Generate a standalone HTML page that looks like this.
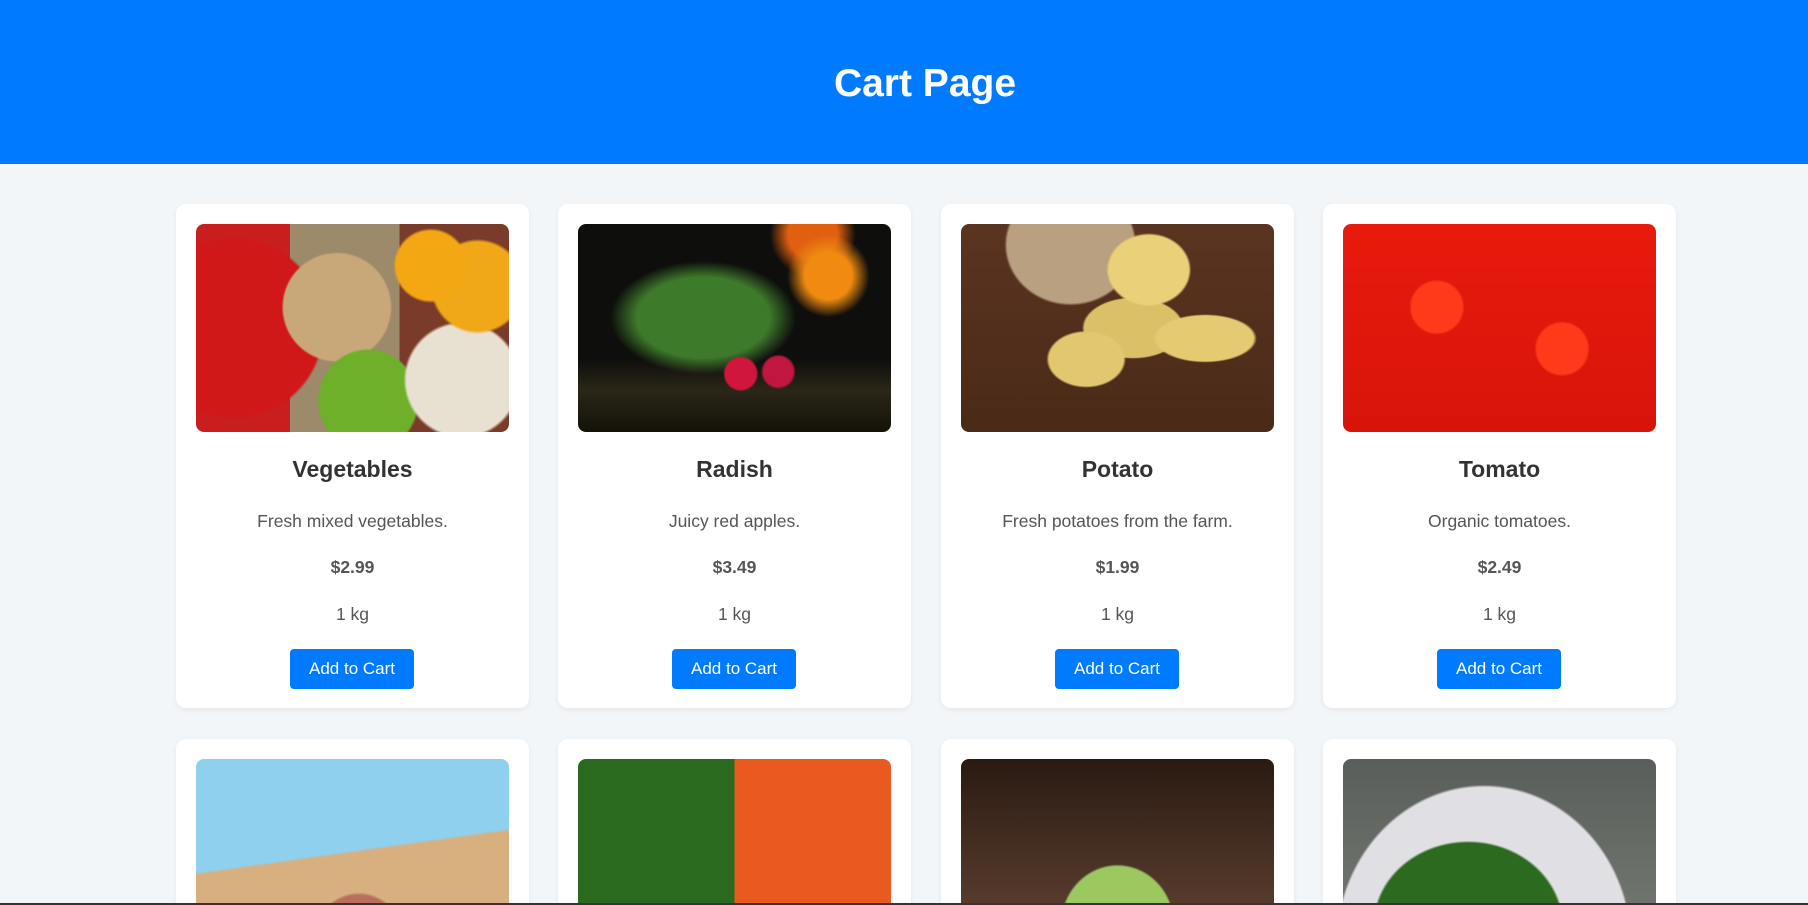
<!DOCTYPE html>
<html><head><meta charset="utf-8"><style>
*{margin:0;padding:0;box-sizing:border-box}
html,body{width:1808px;height:905px;overflow:hidden;background:#f2f6f9;font-family:"Liberation Sans",Arial,sans-serif}
#wrap{position:relative;width:1808px;height:905px;overflow:hidden}
header{position:absolute;left:0;top:0;width:1808px;height:164px;background:#007bff}
header h1{position:absolute;left:0;width:1850px;top:60px;text-align:center;color:#fff;font-size:39px;font-weight:bold;line-height:48px}
.card{position:absolute;width:353px;height:504px;background:#fff;border-radius:10px;box-shadow:0 2px 6px rgba(0,0,0,0.06);text-align:center;overflow:hidden}
.r2{height:166px;border-radius:10px 10px 0 0}
.img{position:absolute;left:20px;top:20px;width:313px;height:208px;border-radius:8px;overflow:hidden}
.t{position:absolute;left:0;right:0;top:250px;font-size:23px;font-weight:bold;color:#333;line-height:30px}
.d{position:absolute;left:0;right:0;top:305px;font-size:17.5px;color:#555;line-height:24px}
.p{position:absolute;left:0;right:0;top:351px;font-size:17.5px;font-weight:bold;color:#555;line-height:24px}
.k{position:absolute;left:0;right:0;top:398px;font-size:17.5px;color:#555;line-height:24px}
.b{position:absolute;left:114px;top:445px;width:124px;height:40px;background:#007bff;color:#fff;border-radius:4px;font-size:17px;line-height:40px}
.line{position:absolute;left:0;top:903px;width:1808px;height:2px;background:#333}
</style></head><body><div id="wrap">
<header><h1>Cart Page</h1></header>

<div class="card" style="left:176px;top:204px">
<div class="img" style="background:
radial-gradient(circle at 75% 20%,#f3a712 0 12%,transparent 13%),
radial-gradient(circle at 90% 30%,#f0a818 0 14%,transparent 15%),
radial-gradient(circle at 85% 75%,#e8e0d0 0 18%,transparent 19%),
radial-gradient(ellipse at 55% 85%,#6fb02a 0 20%,transparent 21%),
radial-gradient(circle at 45% 40%,#c8a878 0 25%,transparent 26%),
radial-gradient(circle at 12% 50%,#d01818 0 30%,transparent 31%),
linear-gradient(90deg,#c81e1e 0 30%,#9c8a6a 30% 65%,#7a3b2a 65% 100%)"></div>
<div class="t">Vegetables</div><div class="d">Fresh mixed vegetables.</div><div class="p">$2.99</div><div class="k">1 kg</div><div class="b">Add to Cart</div></div>

<div class="card" style="left:558px;top:204px">
<div class="img" style="background:
radial-gradient(circle at 52% 72%,#d0163c 0 7%,transparent 8%),
radial-gradient(circle at 64% 71%,#c01640 0 6%,transparent 7%),
radial-gradient(circle at 80% 25%,#f08a10 0 8%,transparent 14%),
radial-gradient(circle at 75% 5%,#e06010 0 8%,transparent 14%),
radial-gradient(ellipse at 40% 45%,#3d7a2a 0 25%,transparent 35%),
linear-gradient(180deg,#0e0e0c 0 65%,#2a2618 80%,#141208 100%)"></div>
<div class="t">Radish</div><div class="d">Juicy red apples.</div><div class="p">$3.49</div><div class="k">1 kg</div><div class="b">Add to Cart</div></div>

<div class="card" style="left:941px;top:204px">
<div class="img" style="background:
radial-gradient(ellipse at 40% 65%,#e2c670 0 14%,transparent 15%),
radial-gradient(ellipse at 78% 55%,#e6ca72 0 14%,transparent 15%),
radial-gradient(ellipse at 60% 22%,#ead078 0 15%,transparent 16%),
radial-gradient(ellipse at 55% 50%,#dcc068 0 20%,transparent 21%),
radial-gradient(ellipse at 35% 10%,#b8a080 0 22%,transparent 23%),
linear-gradient(180deg,#5a3420,#4a2a18)"></div>
<div class="t">Potato</div><div class="d">Fresh potatoes from the farm.</div><div class="p">$1.99</div><div class="k">1 kg</div><div class="b">Add to Cart</div></div>

<div class="card" style="left:1323px;top:204px">
<div class="img" style="background:
radial-gradient(circle at 30% 40%,#ff3a1a 0 10%,transparent 11%),
radial-gradient(circle at 70% 60%,#ff3a1a 0 10%,transparent 11%),
linear-gradient(180deg,#e81a0c,#d8140a)"></div>
<div class="t">Tomato</div><div class="d">Organic tomatoes.</div><div class="p">$2.49</div><div class="k">1 kg</div><div class="b">Add to Cart</div></div>

<div class="card r2" style="left:176px;top:739px">
<div class="img" style="background:
radial-gradient(ellipse at 52% 95%,#b8705a 0 22%,transparent 23%),
linear-gradient(172deg,#8ed0ee 0 45%,#d8b080 46% 100%)"></div></div>

<div class="card r2" style="left:558px;top:739px">
<div class="img" style="background:linear-gradient(90deg,#2a6a1e 0 50%,#e85a20 50% 100%)"></div></div>

<div class="card r2" style="left:941px;top:739px">
<div class="img" style="background:
radial-gradient(ellipse at 50% 80%,#9cc860 0 25%,transparent 26%),
linear-gradient(180deg,#2a1a12,#6a4a38)"></div></div>

<div class="card r2" style="left:1323px;top:739px">
<div class="img" style="background:
radial-gradient(ellipse at 40% 80%,#2c6a20 0 35%,transparent 36%),
radial-gradient(ellipse at 45% 90%,#e0e0e4 0 60%,transparent 61%),
linear-gradient(180deg,#5a5e5a,#7a7e78)"></div></div>

<div class="line"></div>
</div></body></html>
